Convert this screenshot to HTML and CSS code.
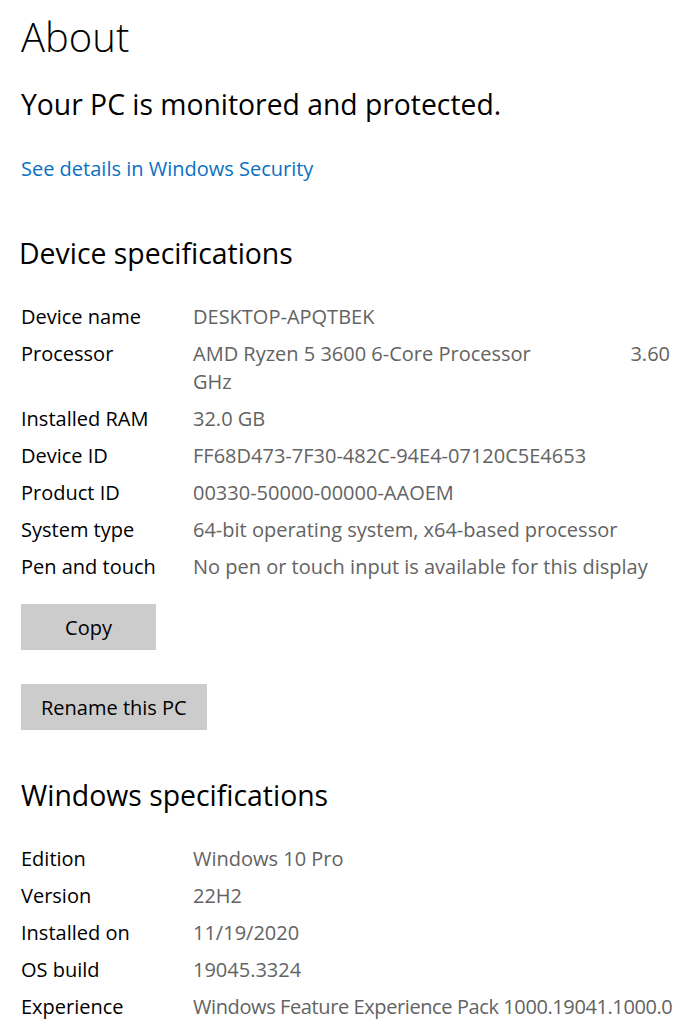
FILE: index.html
```html
<!DOCTYPE html>
<html lang="en">
<head>
<meta charset="utf-8">
<title>About</title>
<link rel="stylesheet" href="styles.css">
</head>
<body>
<main class="page">
  <h1 class="title">About</h1>
  <p class="status">Your PC is monitored and protected.</p>
  <a class="link" href="#">See details in Windows Security</a>

  <h2 class="section">Device specifications</h2>
  <dl class="specs">
    <div class="row"><dt>Device name</dt><dd>DESKTOP-APQTBEK</dd></div>
    <div class="row"><dt>Processor</dt><dd class="wrap"><span class="line"><span>AMD Ryzen 5 3600 6-Core Processor</span><span>3.60</span></span><span class="line">GHz</span></dd></div>
    <div class="row"><dt>Installed RAM</dt><dd>32.0 GB</dd></div>
    <div class="row"><dt>Device ID</dt><dd>FF68D473-7F30-482C-94E4-07120C5E4653</dd></div>
    <div class="row"><dt>Product ID</dt><dd>00330-50000-00000-AAOEM</dd></div>
    <div class="row"><dt>System type</dt><dd>64-bit operating system, x64-based processor</dd></div>
    <div class="row"><dt>Pen and touch</dt><dd>No pen or touch input is available for this display</dd></div>
  </dl>
  <div class="buttons">
    <button class="btn btn-copy" type="button">Copy</button>
    <button class="btn" type="button">Rename this PC</button>
  </div>

  <h2 class="section section-win">Windows specifications</h2>
  <dl class="specs">
    <div class="row"><dt>Edition</dt><dd>Windows 10 Pro</dd></div>
    <div class="row"><dt>Version</dt><dd>22H2</dd></div>
    <div class="row"><dt>Installed on</dt><dd>11/19/2020</dd></div>
    <div class="row"><dt>OS build</dt><dd>19045.3324</dd></div>
    <div class="row"><dt>Experience</dt><dd class="tight">Windows Feature Experience Pack 1000.19041.1000.0</dd></div>
  </dl>
</main>
</body>
</html>
```
FILE: styles.css
```css
html, body {
  margin: 0;
  padding: 0;
  background: #ffffff;
}
body {
  font-family: "Open Sans", "Noto Sans", sans-serif;
  color: #000000;
  overflow: hidden;
}
.page {
  display: flex;
  flex-direction: column;
  align-items: flex-start;
  padding: 13px 26px 0 21px;
}
.title {
  margin: 0;
  font-size: 40px;
  line-height: 48px;
  font-weight: 300;
}
.status {
  margin: 25px 0 0;
  font-size: 28.3px;
  line-height: 36px;
  font-weight: 400;
}
.link {
  margin-top: 33px;
  font-size: 20px;
  line-height: 28px;
  color: #0a70c2;
  text-decoration: none;
}
.section {
  margin: 53px 0 0 -2px;
  font-size: 28.4px;
  line-height: 34px;
  font-weight: 400;
}
.section-win {
  margin: 48px 0 0;
}
.specs {
  margin: 33px 0 0;
  align-self: stretch;
  display: flex;
  flex-direction: column;
  gap: 9px;
}
.row {
  display: flex;
  font-size: 20px;
  line-height: 28px;
}
.row dt {
  width: 172px;
  flex: none;
  color: #000000;
}
.row dd {
  margin: 0;
  flex: 1;
  color: #636363;
  white-space: nowrap;
}
.row dd.tight {
  letter-spacing: -0.4px;
}
.row dd.wrap {
  display: flex;
  flex-direction: column;
}
.line {
  display: flex;
  justify-content: space-between;
  padding-right: 4px;
}
.buttons {
  margin-top: 23px;
  display: flex;
  flex-direction: column;
  align-items: flex-start;
  gap: 34px;
}
.btn {
  font-family: inherit;
  font-size: 20px;
  line-height: 28px;
  color: #000000;
  background: #cccccc;
  border: 0;
  border-radius: 0;
  padding: 10px 20px 8px;
  margin: 0;
}
.btn-copy {
  min-width: 135px;
}
```
